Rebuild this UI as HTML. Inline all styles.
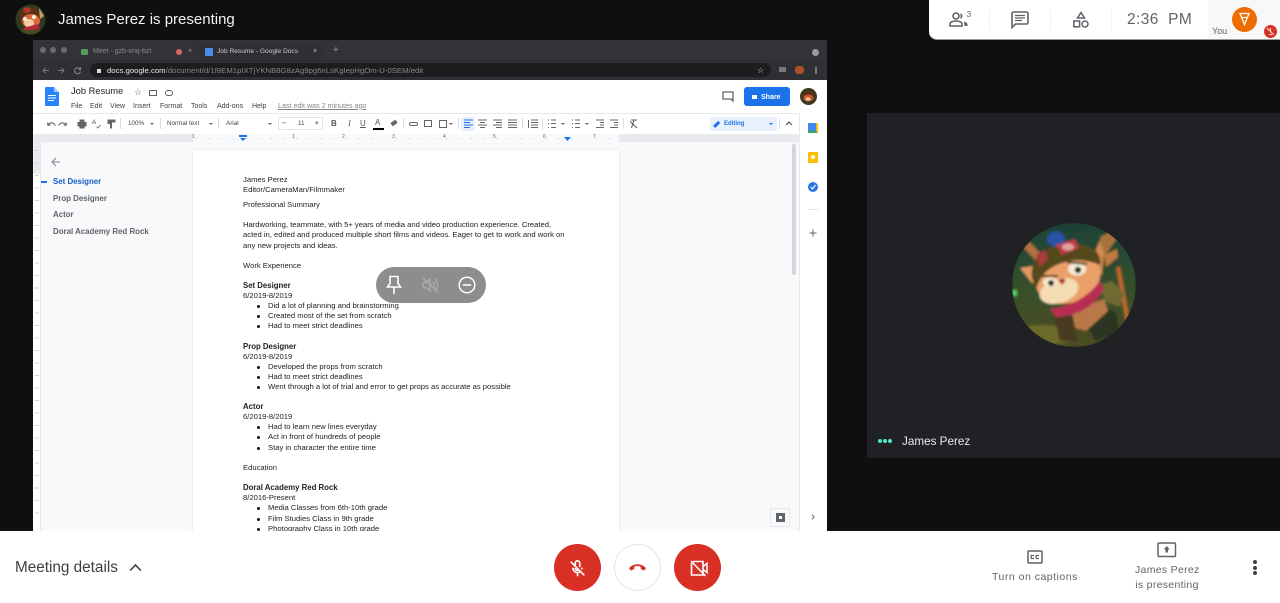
<!DOCTYPE html>
<html><head><meta charset="utf-8"><style>
html,body{margin:0;padding:0;width:1280px;height:603px;overflow:hidden;background:#0f0f0f;font-family:"Liberation Sans",sans-serif}
.a,.t,.d,.b{position:absolute;white-space:nowrap}
.d{font-size:7.65px;line-height:10px;color:#222;}
.d.s{font-size:7.8px;font-weight:bold}
.b{width:3px;height:3px;border-radius:50%;background:#111}
svg{position:absolute;overflow:visible}
#share{position:absolute;left:33px;top:40px;width:794px;height:491px;overflow:hidden;background:#f8f9fa;filter:blur(.3px)}
#doc{position:absolute;left:-33px;top:-40px;width:1280px;height:603px}
.m{font-size:7px;color:#3c4043;top:101.500px;position:absolute;line-height:9px}
.n{font-size:7.900px;color:#5f6368;position:absolute;left:53px;line-height:10px;font-weight:bold}
.tb{position:absolute;top:120px;font-size:6.300px;color:#444;line-height:8px}
.ar{position:absolute;top:123px;width:0;height:0;border:2.200px solid transparent;border-top:2.800px solid #666;border-bottom:0}
.sp{position:absolute;top:118px;width:1px;height:11px;background:#dadce0}
</style></head><body>

<!-- top presenter bar -->
<svg style="left:15px;top:4px" width="31" height="31" viewBox="0 0 31 31"><defs><clipPath id="c1"><circle cx="15.500" cy="15.500" r="15"/></clipPath></defs><g clip-path="url(#c1)"><rect width="31" height="31" fill="#2e3a22"/><path d="M4 8Q15 0 26 7L27 14L5 18z" fill="#5c3018"/><ellipse cx="12" cy="6" rx="4" ry="3" fill="#a83a2c"/><ellipse cx="16" cy="17" rx="9" ry="7" fill="#d8683a"/><ellipse cx="14" cy="19" rx="5" ry="4" fill="#f2cfa0"/><circle cx="10" cy="15" r="2" fill="#f5ecd6"/><circle cx="19" cy="13" r="2.200" fill="#f5ecd6"/><path d="M8 24L23 20L25 25L10 27z" fill="#b02a3a"/><rect x="3" y="26" width="25" height="5" fill="#4a4a20"/><path d="M24 4L29 12L25 15z" fill="#c8a060"/></g></svg>
<div class="t" style="left:58px;top:10px;font-size:15px;line-height:20px;color:#f1f3f4">James Perez is presenting</div>

<!-- shared screen -->
<div id="share"><div id="doc">
  <div class="a" style="left:33px;top:40px;width:794px;height:20px;background:#323336"></div>
  <div class="a" style="left:33px;top:60px;width:794px;height:20px;background:#2f3033"></div>
  <div class="a" style="left:40px;top:47px;width:6px;height:6px;border-radius:50%;background:#6a6b6e"></div>
  <div class="a" style="left:50px;top:47px;width:6px;height:6px;border-radius:50%;background:#6a6b6e"></div>
  <div class="a" style="left:61px;top:47px;width:6px;height:6px;border-radius:50%;background:#6a6b6e"></div>
  <div class="a" style="left:81px;top:49px;width:7px;height:6px;background:#5a9a5a;border-radius:1px"></div>
  <div class="t" style="left:93px;top:47px;font-size:7px;line-height:9px;color:#8a8b8e">Meet - gzb-xriq-bzt</div>
  <div class="a" style="left:176px;top:49px;width:6px;height:6px;border-radius:50%;background:#d8655c"></div>
  <div class="t" style="left:188px;top:47px;font-size:7px;line-height:9px;color:#9a9b9e">×</div>
  <div class="a" style="left:199px;top:44px;width:125px;height:16px;background:#2f3033;border-radius:5px 5px 0 0"></div>
  <div class="a" style="left:205px;top:48px;width:8px;height:8px;background:#4a8cf0;border-radius:1px"></div>
  <div class="t" style="left:217px;top:47px;font-size:6.600px;line-height:9px;color:#c8c9cc">Job Resume - Google Docs</div>
  <div class="t" style="left:313px;top:47px;font-size:7px;line-height:9px;color:#c8c9cc">×</div>
  <div class="t" style="left:333px;top:45px;font-size:10px;line-height:12px;color:#9a9b9e">+</div>
  <div class="a" style="left:812px;top:49px;width:7px;height:7px;border-radius:50%;background:#9a9b9e"></div>
  <svg style="left:41px;top:66px" width="42" height="9" viewBox="0 0 42 9"><path d="M8 4.500H2M4.500 2L2 4.500L4.500 7M17 4.500H23M20.500 2L23 4.500L20.500 7" fill="none" stroke="#77787b" stroke-width="1"/><path d="M39 3A3 3 0 1 0 39.500 5.500M39.500 1.500V3.500H37.500" fill="none" stroke="#8a8b8e" stroke-width="1"/></svg>
  <div class="a" style="left:90px;top:63px;width:681px;height:14px;border-radius:7px;background:#1c1d1f"></div>
  <div class="a" style="left:97px;top:69px;width:4px;height:4px;background:#ddd"></div>
  <div class="t" style="left:107px;top:66px;font-size:7.750px;line-height:9px;color:#e8eaed;font-weight:normal">docs.google.com<span style="color:#85878a">/document/d/1f8EM1pIXTjYKNB8G8zAg9pg6nLsKgIepHgOm-U-0SEM/edit</span></div>
  <div class="t" style="left:757px;top:66px;font-size:8px;line-height:9px;color:#ddd">☆</div>
  <div class="a" style="left:779px;top:67px;width:7px;height:5px;background:#77787b"></div>
  <div class="a" style="left:795px;top:66px;width:9px;height:8px;background:#a8522c;border-radius:3px"></div>
  <div class="a" style="left:815px;top:67px;width:2px;height:7px;background:#77787b"></div>

  <!-- docs header -->
  <div class="a" style="left:33px;top:80px;width:794px;height:33px;background:#fff"></div>
  <div class="a" style="left:33px;top:113px;width:794px;height:21px;background:#fff;border-top:1px solid #e6e8ea;box-sizing:border-box"></div>
  <svg style="left:45px;top:87px" width="14" height="19" viewBox="0 0 14 19"><path d="M1 0H9L14 5V18a1 1 0 0 1-1 1H1a1 1 0 0 1-1-1V1a1 1 0 0 1 1-1z" fill="#2684fc"/><path d="M9 0V5H14z" fill="#a7c8f8"/><path d="M3 8.500H11M3 11H11M3 13.500H9" stroke="#fff" stroke-width="1"/></svg>
  <div class="t" style="left:71px;top:86px;font-size:9.300px;line-height:11px;color:#202124">Job Resume</div>
  <div class="t" style="left:134px;top:87px;font-size:9px;line-height:11px;color:#5f6368">☆</div>
  <div class="a" style="left:149px;top:89.500px;width:8px;height:6px;border:1px solid #5f6368;box-sizing:border-box"></div>
  <div class="a" style="left:165px;top:89.500px;width:8px;height:6px;border:1px solid #5f6368;border-radius:3px;box-sizing:border-box"></div>
  <div class="m" style="left:71px">File</div><div class="m" style="left:90px">Edit</div><div class="m" style="left:110px">View</div><div class="m" style="left:133px">Insert</div><div class="m" style="left:160px">Format</div><div class="m" style="left:191px">Tools</div><div class="m" style="left:217px">Add-ons</div><div class="m" style="left:252px">Help</div>
  <div class="m" style="left:278px;color:#80868b;text-decoration:underline;font-size:7.150px">Last edit was 2 minutes ago</div>
  <svg style="left:722px;top:91px" width="12" height="11" viewBox="0 0 12 11"><path d="M1 1H11V10L9 8H1z" fill="none" stroke="#5f6368" stroke-width="1.300"/></svg>
  <div class="a" style="left:744px;top:87px;width:46px;height:19px;background:#1a73e8;border-radius:3px"></div>
  <div class="a" style="left:752px;top:95px;width:5px;height:4px;background:#fff"></div>
  <div class="t" style="left:761px;top:93px;font-size:7px;line-height:9px;color:#fff;font-weight:bold">Share</div>
  <svg style="left:800px;top:88px" width="17" height="17" viewBox="0 0 17 17"><circle cx="8.500" cy="8.500" r="8.500" fill="#3a3a22"/><path d="M2 6Q8 1 15 5L14 9L3 10z" fill="#5c3018"/><ellipse cx="8.500" cy="10" rx="5" ry="3.500" fill="#c9562e"/><ellipse cx="8" cy="11" rx="2.500" ry="1.800" fill="#eec79c"/></svg>

  <!-- toolbar -->
  <svg style="left:47px;top:119px" width="20" height="10" viewBox="0 0 26 10"><path d="M1 3V6.500H4.500M1.500 6C4 2.500 8.500 2.500 11 7M25 3V6.500H21.500M24.500 6C22 2.500 17.500 2.500 15 7" fill="none" stroke="#555" stroke-width="1.300"/></svg>
  <svg style="left:77px;top:119px" width="10" height="10" viewBox="0 0 10 10"><path d="M2.500 0.500H7.500V3H2.500zM0.500 3H9.500V7.500H7.500V9.500H2.500V7.500H0.500z" fill="#666"/></svg>
  <div class="t tb" style="left:92px;top:119px">A</div>
  <svg style="left:96px;top:124px" width="5" height="5" viewBox="0 0 5 5"><path d="M0.500 2.500L2 4L4.500 1" fill="none" stroke="#666" stroke-width=".8"/></svg>
  <svg style="left:107px;top:119px" width="9" height="10" viewBox="0 0 9 10"><path d="M0.500 0.500H8.500V3.500H5V9.500H3V5H0.500z" fill="#666"/></svg>
  <div class="sp" style="left:120px"></div>
  <div class="t tb" style="left:128px">100%</div><div class="ar" style="left:150px"></div>
  <div class="sp" style="left:160px"></div>
  <div class="t tb" style="left:167px">Normal text</div><div class="ar" style="left:209px"></div>
  <div class="sp" style="left:218px"></div>
  <div class="t tb" style="left:226px">Arial</div><div class="ar" style="left:268px"></div>
  <div class="a" style="left:278px;top:117px;width:45px;height:13px;border:1px solid #e3e5e7;box-sizing:border-box"></div>
  <div class="t tb" style="left:282px;font-weight:bold">−</div><div class="t tb" style="left:298px">11</div><div class="t tb" style="left:315px;font-weight:bold">+</div>
  <div class="t" style="left:331px;top:119px;font-size:8px;line-height:9px;font-weight:bold;color:#555">B</div>
  <div class="t" style="left:348px;top:119px;font-size:8.500px;line-height:9px;font-style:italic;font-family:'Liberation Serif',serif;color:#555">I</div>
  <div class="t" style="left:360px;top:119px;font-size:8px;line-height:9px;text-decoration:underline;color:#555">U</div>
  <div class="t" style="left:375px;top:118px;font-size:8px;line-height:9px;color:#555">A</div><div class="a" style="left:373px;top:128px;width:11px;height:2px;background:#000"></div>
  <div class="a" style="left:391px;top:121px;width:6px;height:4px;background:#666;transform:rotate(-35deg)"></div>
  <div class="sp" style="left:403px"></div>
  <div class="a" style="left:409px;top:121.500px;width:9px;height:4px;border:1px solid #666;border-radius:2px;box-sizing:border-box"></div>
  <div class="a" style="left:424px;top:120px;width:8px;height:7px;border:1px solid #666;box-sizing:border-box"></div>
  <div class="a" style="left:439px;top:120px;width:8px;height:8px;border:1px solid #666;box-sizing:border-box"></div><div class="ar" style="left:449px"></div>
  <div class="sp" style="left:458px"></div>
  <div class="a" style="left:461px;top:117px;width:14px;height:14px;background:#e8f0fe;border-radius:2px"></div>
  <svg style="left:463px;top:119px" width="180" height="10" viewBox="0 0 180 10"><path d="M1 1H10M1 3.500H7M1 6H10M1 8.500H7" stroke="#1a73e8" stroke-width="1"/><path d="M15 1H24M17 3.500H22M15 6H24M17 8.500H22M30 1H39M33 3.500H39M30 6H39M33 8.500H39M45 1H54M45 3.500H54M45 6H54M45 8.500H54M68 1H75M68 3.500H75M68 6H75M68 8.500H75M65.500 1V9M85 1H86M88 1H93M85 4.500H86M88 4.500H93M85 8.500H86M88 8.500H93M109 1H110M112 1H117M109 4.500H110M112 4.500H117M109 8.500H110M112 8.500H117M133 1H141M137 3.500H141M137 6H141M133 8.500H141M147 1H155M151 3.500H155M151 6H155M147 8.500H155" stroke="#666" stroke-width="1" fill="none"/><path d="M168 1H174M171 1L168.500 9M167 2.500L174 9" stroke="#555" stroke-width="1" fill="none"/></svg>
  <div class="sp" style="left:522px"></div><div class="sp" style="left:542px"></div><div class="sp" style="left:623px"></div>
  <div class="ar" style="left:561px"></div><div class="ar" style="left:585px"></div>
  <div class="a" style="left:710px;top:117px;width:67px;height:14px;background:#e8f0fe;border-radius:2px"></div>
  <div class="a" style="left:713px;top:122.500px;width:7px;height:2.500px;background:#1a73e8;transform:rotate(-45deg)"></div>
  <div class="t" style="left:724px;top:120px;font-size:6px;line-height:8px;color:#1a73e8;font-weight:bold">Editing</div>
  <div class="ar" style="left:769px;border-top-color:#1a73e8"></div>
  <div class="sp" style="left:779px"></div>
  <svg style="left:785px;top:121px" width="8" height="5" viewBox="0 0 8 5"><path d="M1 4L4 1L7 4" fill="none" stroke="#555" stroke-width="1.200"/></svg>

  <!-- ruler -->
  <div class="a" style="left:33px;top:134px;width:766px;height:8px;background:#e8eaed"></div>
  <div class="a" style="left:193px;top:134px;width:426px;height:8px;background:#f8f9fa"></div>
  <div class="a" style="left:196px;top:137.500px;width:420px;height:1px;background:repeating-linear-gradient(90deg,#c4c6c9 0 1px,transparent 1px 12.500px)"></div>
  <div class="t" style="left:192px;top:134px;font-size:5px;line-height:7px;color:#666"><span style="position:absolute;left:0">1</span><span style="position:absolute;left:100px">1</span><span style="position:absolute;left:150px">2</span><span style="position:absolute;left:200px">3</span><span style="position:absolute;left:251px">4</span><span style="position:absolute;left:301px">5</span><span style="position:absolute;left:351px">6</span><span style="position:absolute;left:401px">7</span></div>
  <svg style="left:239px;top:135px" width="8" height="6" viewBox="0 0 8 6"><path d="M0 0H8V2H0zM1 3H7L4 6z" fill="#1a73e8"/></svg>
  <svg style="left:564px;top:137px" width="7" height="4" viewBox="0 0 7 4"><path d="M0 0H7L3.500 4z" fill="#1a73e8"/></svg>

  <!-- left rail -->
  <div class="a" style="left:33px;top:142px;width:8px;height:389px;background:#fff;border-right:1px solid #e8eaed;box-sizing:border-box"></div>
  <div class="a" style="left:33px;top:142px;width:7px;height:32px;background:#e8eaed"></div>
  <div class="a" style="left:35px;top:150px;width:4px;height:375px;background:repeating-linear-gradient(180deg,#d0d2d5 0 1px,transparent 1px 12.500px)"></div>

  <!-- outline -->
  <svg style="left:51px;top:157px" width="10" height="10" viewBox="0 0 10 10"><path d="M9 5H1.500M5 1L1 5L5 9" fill="none" stroke="#80868b" stroke-width="1"/></svg>
  <div class="a" style="left:41px;top:181px;width:6px;height:1.500px;background:#1a73e8"></div>
  <div class="n" style="top:177px;color:#1a5fc8">Set Designer</div>
  <div class="n" style="top:194px">Prop Designer</div>
  <div class="n" style="top:210px">Actor</div>
  <div class="n" style="top:227px">Doral Academy Red Rock</div>

  <!-- page -->
  <div class="a" style="left:193px;top:150px;width:426px;height:381px;background:#fff;box-shadow:0 0 2px #d8dadd"></div>
  <div class="d" style="left:243px;top:175px">James Perez</div>
  <div class="d" style="left:243px;top:185px">Editor/CameraMan/Filmmaker</div>
  <div class="d" style="left:243px;top:200px">Professional Summary</div>
  <div class="d" style="left:243px;top:220px">Hardworking, teammate, with 5+ years of media and video production experience. Created,</div>
  <div class="d" style="left:243px;top:230px">acted in, edited and produced multiple short films and videos. Eager to get to work and work on</div>
  <div class="d" style="left:243px;top:241px">any new projects and ideas.</div>
  <div class="d" style="left:243px;top:261px">Work Experience</div>
  <div class="d s" style="left:243px;top:281px">Set Designer</div>
  <div class="d" style="left:243px;top:291px">6/2019-8/2019</div>
  <div class="b" style="left:257px;top:305px"></div><div class="d" style="left:268px;top:301px">Did a lot of planning and brainstorming</div>
  <div class="b" style="left:257px;top:315px"></div><div class="d" style="left:268px;top:311px">Created most of the set from scratch</div>
  <div class="b" style="left:257px;top:325px"></div><div class="d" style="left:268px;top:321px">Had to meet strict deadlines</div>
  <div class="d s" style="left:243px;top:342px">Prop Designer</div>
  <div class="d" style="left:243px;top:352px">6/2019-8/2019</div>
  <div class="b" style="left:257px;top:366px"></div><div class="d" style="left:268px;top:362px">Developed the props from scratch</div>
  <div class="b" style="left:257px;top:376px"></div><div class="d" style="left:268px;top:372px">Had to meet strict deadlines</div>
  <div class="b" style="left:257px;top:386px"></div><div class="d" style="left:268px;top:382px">Went through a lot of trial and error to get props as accurate as possible</div>
  <div class="d s" style="left:243px;top:402px">Actor</div>
  <div class="d" style="left:243px;top:412px">6/2019-8/2019</div>
  <div class="b" style="left:257px;top:426px"></div><div class="d" style="left:268px;top:422px">Had to learn new lines everyday</div>
  <div class="b" style="left:257px;top:436px"></div><div class="d" style="left:268px;top:432px">Act in front of hundreds of people</div>
  <div class="b" style="left:257px;top:447px"></div><div class="d" style="left:268px;top:443px">Stay in character the entire time</div>
  <div class="d" style="left:243px;top:463px">Education</div>
  <div class="d s" style="left:243px;top:483px">Doral Academy Red Rock</div>
  <div class="d" style="left:243px;top:493px">8/2016-Present</div>
  <div class="b" style="left:257px;top:507px"></div><div class="d" style="left:268px;top:503px">Media Classes from 6th-10th grade</div>
  <div class="b" style="left:257px;top:518px"></div><div class="d" style="left:268px;top:514px">Film Studies Class in 9th grade</div>
  <div class="b" style="left:257px;top:528px"></div><div class="d" style="left:268px;top:524px">Photography Class in 10th grade</div>

  <!-- scrollbar + right rail -->
  <div class="a" style="left:792px;top:144px;width:4px;height:131px;background:#d4d6d9;border-radius:2px"></div>
  <div class="a" style="left:799px;top:113px;width:28px;height:418px;background:#fff;border-left:1px solid #e8eaed;box-sizing:border-box"></div>
  <div class="a" style="left:808px;top:123px;width:10px;height:10px;background:#4285f4;border-radius:1px;box-sizing:border-box;border-bottom:2px solid #34a853;border-right:2px solid #fbbc04"></div>
  <div class="a" style="left:808px;top:152px;width:10px;height:11px;background:#fbbc04;border-radius:1px"></div>
  <div class="a" style="left:811px;top:155px;width:4px;height:4px;background:#fff;border-radius:50%"></div>
  <div class="a" style="left:808px;top:182px;width:10px;height:10px;background:#2b74e6;border-radius:50%"></div>
  <svg style="left:810px;top:184px" width="6" height="6" viewBox="0 0 6 6"><path d="M0.500 3L2.500 5L5.500 1" fill="none" stroke="#fff" stroke-width="1.200"/></svg>
  <div class="a" style="left:808px;top:209px;width:11px;height:1px;background:#e3e5e7"></div>
  <svg style="left:809px;top:229px" width="8" height="8" viewBox="0 0 8 8"><path d="M4 0.500V7.500M0.500 4H7.500" stroke="#666" stroke-width="1"/></svg>
  <div class="a" style="left:770px;top:508px;width:20px;height:19px;background:#f8f9fa;border:1px solid #e8eaed;box-sizing:border-box"></div>
  <div class="a" style="left:776px;top:513px;width:9px;height:9px;background:#5f6368"></div>
  <div class="a" style="left:779px;top:516px;width:3px;height:3px;background:#fff"></div>
  <svg style="left:811px;top:514px" width="4" height="6" viewBox="0 0 4 6"><path d="M1 0.500L3 3L1 5.500" fill="none" stroke="#666" stroke-width="1"/></svg>
</div></div>

<!-- floating pill -->
<div class="a" style="left:376px;top:267px;width:110px;height:36px;border-radius:18px;background:#8b8d8f"></div>
<svg style="left:385px;top:275px" width="18" height="20" viewBox="0 0 18 20"><path d="M5 1.500H13V8.500L15.500 12H2.500L5 8.500zM9 12V19" fill="none" stroke="#fff" stroke-width="1.600"/></svg>
<svg style="left:421px;top:276px" width="19" height="18" viewBox="0 0 19 18"><path d="M2 6.500H5L9 3V15L5 11.500H2zM12 5.500C14 7.500 14 10.500 12 12.500M14 3C17.500 6.500 17.500 11.500 14 15M2 2L17 16" fill="none" stroke="#a6a8aa" stroke-width="1.600"/></svg>
<svg style="left:458px;top:276px" width="18" height="18" viewBox="0 0 18 18"><circle cx="9" cy="9" r="7.800" fill="none" stroke="#fff" stroke-width="1.500"/><path d="M4.800 9H13.200" stroke="#fff" stroke-width="1.600"/></svg>

<!-- participant tile -->
<div class="a" style="left:867px;top:113px;width:413px;height:345px;background:#202124"></div>
<svg style="left:1012px;top:223px" width="124" height="124" viewBox="0 0 124 124"><defs><clipPath id="c2"><circle cx="62" cy="62" r="62"/></clipPath><linearGradient id="bg" x1="0" y1="0" x2="0" y2="1"><stop offset="0" stop-color="#1c4238"/><stop offset=".5" stop-color="#34502c"/><stop offset="1" stop-color="#4e4d20"/></linearGradient><filter id="sf"><feGaussianBlur stdDeviation="1"/></filter></defs><g clip-path="url(#c2)"><g filter="url(#sf)"><rect width="124" height="124" fill="url(#bg)"/>
<ellipse cx="30" cy="112" rx="34" ry="10" fill="#6b6a2a"/>
<rect x="0" y="67" width="5" height="6" fill="#5ac85a"/>
<path d="M11 24L18 19L30 32L24 38z" fill="#b07040"/>
<path d="M88 14L100 8L106 14L92 34z" fill="#a8723e"/>
<path d="M92 32L105 26L106 34L94 44z" fill="#c07a40"/>
<path d="M104 45L108 43L118 98L114 100z" fill="#b8682a"/>
<path d="M88 62L100 58L112 70L108 84L92 78z" fill="#6e6a30"/>
<path d="M72 100Q90 78 104 90L108 112L84 118z" fill="#2c3620"/>
<path d="M58 88L92 76L96 88L74 108L60 104z" fill="#b87848"/>
<path d="M42 92L60 90L66 118L48 118z" fill="#4a3a20"/>
<path d="M8 45L27 42L28 58L20 60z" fill="#e09a62"/>
<path d="M76 45L88 17L92 30L90 52z" fill="#d28a50"/>
<ellipse cx="56" cy="55" rx="33" ry="25" fill="#eba06a" transform="rotate(-18 56 55)"/>
<path d="M20 55Q17 34 40 24Q62 14 84 28Q90 36 88 42Q68 34 50 40Q30 46 24 66z" fill="#54481f"/>
<ellipse cx="44" cy="16" rx="9" ry="7.500" fill="#2a52a8"/>
<path d="M44 22L63 16L67 25L50 32z" fill="#bf3a48"/>
<ellipse cx="56" cy="24" rx="6" ry="3.500" fill="#e0a0a0"/>
<path d="M24 32L33 27L36 36L28 44z" fill="#a83a3a"/>
<ellipse cx="47" cy="68" rx="20" ry="12" fill="#f6dcb4" transform="rotate(-18 47 68)"/>
<ellipse cx="65" cy="46" rx="9" ry="6.500" fill="#f5ecd6"/>
<ellipse cx="38" cy="59" rx="7" ry="4.800" fill="#f5ecd6"/>
<circle cx="66" cy="47" r="3.200" fill="#201a10"/><circle cx="39" cy="60" r="3" fill="#201a10"/>
<path d="M30 53L46 53M55 39L75 41" stroke="#3a2412" stroke-width="2"/>
<path d="M46 57Q50 54 54 57L50 62z" fill="#a83226"/>
<path d="M38 86Q70 82 88 58L92 66Q78 92 44 94z" fill="#b82f52"/>
</g></g></svg>
<div class="a" style="left:878px;top:439px;width:4px;height:4px;border-radius:50%;background:#4de8c8"></div>
<div class="a" style="left:883px;top:439px;width:4px;height:4px;border-radius:50%;background:#4de8c8"></div>
<div class="a" style="left:888px;top:439px;width:4px;height:4px;border-radius:50%;background:#4de8c8"></div>
<div class="t" style="left:902px;top:434px;font-size:11.700px;line-height:15px;color:#e8eaed">James Perez</div>

<!-- top right panel -->
<div class="a" style="left:929px;top:0;width:351px;height:39px;background:#fff;border-radius:0 0 0 8px;border-bottom:1px solid #9a9a9a;box-sizing:content-box"></div>
<div class="a" style="left:1208px;top:0;width:72px;height:39px;background:#f7f8f8"></div>
<div class="a" style="left:989px;top:9px;width:1px;height:21px;background:#f1f3f4"></div>
<div class="a" style="left:1050px;top:9px;width:1px;height:21px;background:#f1f3f4"></div>
<div class="a" style="left:1111px;top:9px;width:1px;height:21px;background:#f1f3f4"></div>
<svg style="left:949px;top:12px" width="20" height="15" viewBox="0 0 20 15"><circle cx="7" cy="4" r="3" fill="none" stroke="#5f6368" stroke-width="1.600"/><path d="M1 14V12C1 10 4 9 7 9S13 10 13 12V14z" fill="none" stroke="#5f6368" stroke-width="1.600"/><path d="M11.500 1.200A3 3 0 0 1 11.500 6.800M15 9.500C17 10 18.500 11 18.500 12.500V14H15.500z" fill="#5f6368"/></svg>
<div class="t" style="left:966.500px;top:10px;font-size:8.500px;line-height:9px;color:#5f6368">3</div>
<svg style="left:1011px;top:11px" width="18" height="17" viewBox="0 0 18 17"><path d="M2.500 1H15.500A1.500 1.500 0 0 1 17 2.500V11.500A1.500 1.500 0 0 1 15.500 13H4.500L1 16.500V2.500A1.500 1.500 0 0 1 2.500 1z" fill="none" stroke="#5f6368" stroke-width="1.600"/><path d="M4 4.500H14M4 7H14M4 9.500H11" stroke="#5f6368" stroke-width="1.300"/></svg>
<svg style="left:1072px;top:11px" width="18" height="17" viewBox="0 0 18 17"><path d="M9 1.500L12.500 7H5.500z" fill="none" stroke="#5f6368" stroke-width="1.500"/><rect x="1.800" y="10" width="5.800" height="5.800" fill="none" stroke="#5f6368" stroke-width="1.500"/><circle cx="13" cy="13" r="3" fill="none" stroke="#5f6368" stroke-width="1.500"/></svg>
<div class="t" style="left:1127px;top:10px;font-size:15.500px;line-height:19px;color:#5f6368;letter-spacing:.4px">2:36&nbsp; PM</div>
<div class="a" style="left:1232px;top:7px;width:25px;height:25px;border-radius:50%;background:#ef6c00"></div>
<svg style="left:1238px;top:12px" width="13" height="14" viewBox="0 0 13 14"><path d="M2 1.500H11L6.500 12.500zM3.500 5.500H9.500" fill="none" stroke="#fff" stroke-width="1.300"/></svg>
<div class="t" style="left:1212px;top:26px;font-size:9px;line-height:11px;color:#5f6368">You</div>
<div class="a" style="left:1264px;top:25px;width:13px;height:13px;border-radius:50%;background:#d93025"></div>
<svg style="left:1266px;top:27px" width="9" height="9" viewBox="0 0 9 9"><path d="M4.500 1V5M3 7.500H6M1 1L8 8" stroke="#fff" stroke-width="1" opacity=".85"/></svg>

<!-- bottom bar -->
<div class="a" style="left:0;top:531px;width:1280px;height:72px;background:#fff"></div>
<div class="t" style="left:15px;top:558px;font-size:15.300px;line-height:19px;color:#3c4043">Meeting details</div>
<svg style="left:129px;top:563px" width="13" height="9" viewBox="0 0 13 9"><path d="M1.200 7.500L6.500 2L11.800 7.500" fill="none" stroke="#3c4043" stroke-width="1.600"/></svg>
<div class="a" style="left:554px;top:544px;width:47px;height:47px;border-radius:50%;background:#d93025"></div>
<svg style="left:568px;top:559px" width="19" height="19" viewBox="0 0 21 21"><path d="M13 9V4.500A2.500 2.500 0 0 0 8 4.500V7M8 10A2.500 2.500 0 0 0 12 12M5.500 9.500C5.500 13 8 15 10.500 15C11.800 15 13 14.500 14 13.500M15.500 9.500C15.500 10.200 15.400 10.800 15.200 11.400M10.500 15V19M3 3L18 18" fill="none" stroke="#fff" stroke-width="1.800"/></svg>
<div class="a" style="left:614px;top:544px;width:47px;height:47px;border-radius:50%;background:#fff;border:1px solid #e3e5e7;box-sizing:border-box"></div>
<svg style="left:628px;top:562px" width="19" height="10" viewBox="0 0 21 11"><path d="M1 7C5.500 1 15.500 1 20 7L17.500 9.500L14 7.500V5C12 4.300 9 4.300 7 5V7.500L3.500 9.500z" fill="#d93025"/></svg>
<div class="a" style="left:674px;top:544px;width:47px;height:47px;border-radius:50%;background:#d93025"></div>
<svg style="left:688px;top:558px" width="21" height="21" viewBox="0 0 21 21"><path d="M5 3.500H15V17H3.500V5M15 8.500L19 5.500V14.500L15 11.500M3 3L17.500 18" fill="none" stroke="#fff" stroke-width="1.600"/></svg>
<svg style="left:1027px;top:550px" width="16" height="14" viewBox="0 0 16 14"><rect x="1" y="1" width="14" height="12" rx="1" fill="none" stroke="#5f6368" stroke-width="1.500"/><path d="M7 5.500H4.200V8.500H7M12 5.500H9.200V8.500H12" fill="none" stroke="#5f6368" stroke-width="1.200"/></svg>
<div class="t" style="left:992px;top:571px;font-size:10.500px;line-height:13px;color:#5f6368;letter-spacing:.5px">Turn on captions</div>
<svg style="left:1157px;top:542px" width="20" height="16" viewBox="0 0 20 16"><rect x="1" y="1" width="17.500" height="13.500" rx="1" fill="none" stroke="#5f6368" stroke-width="1.500"/><path d="M9.800 4L6.800 7.500H8.500V10.500H11V7.500H12.800z" fill="#5f6368"/></svg>
<div class="t" style="left:1135px;top:563px;font-size:10.500px;line-height:14.500px;color:#5f6368;text-align:center;width:64px;letter-spacing:.3px">James Perez<br>is presenting</div>
<div class="a" style="left:1253px;top:560px;width:4px;height:4px;border-radius:50%;background:#3c4043"></div>
<div class="a" style="left:1253px;top:566px;width:4px;height:4px;border-radius:50%;background:#3c4043"></div>
<div class="a" style="left:1253px;top:571px;width:4px;height:4px;border-radius:50%;background:#3c4043"></div>
</body></html>
